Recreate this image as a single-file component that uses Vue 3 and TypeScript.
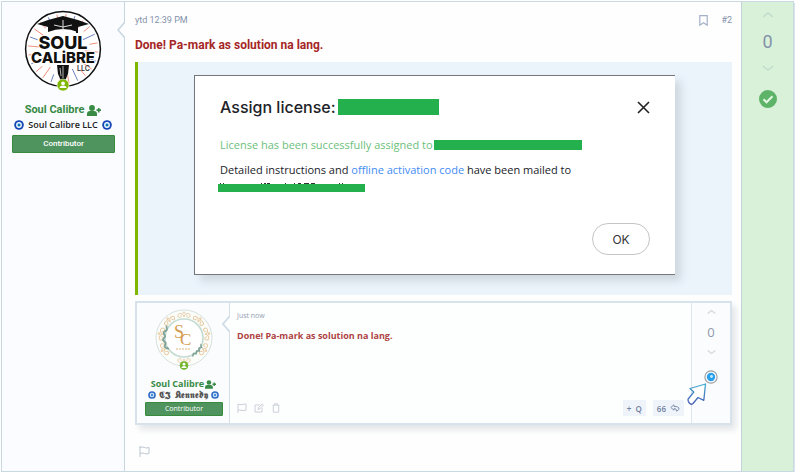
<script setup lang="ts">
interface Ray {
  angle: number
  color: string
  inner: number
}

const rays: Ray[] = Array.from({ length: 24 }, (_, i) => ({
  angle: i * 15 + 5,
  color: i % 3 === 1 ? '#5a72b5' : '#ee7a66',
  inner: i % 2 ? 27 : 22,
}))

const sprigs: number[] = [0, 1, 2, 3, 4, 5, 6]
const ornaments: number[] = [0, 40, 80, 120, 180, 240, 280, 320]
</script>

<template>
  <article class="post">
    <aside class="user">
      <svg class="avatar" viewBox="0 0 78 78" role="img" aria-label="Soul Calibre">
        <circle cx="39" cy="39" r="37.4" fill="#fff" stroke="#111" stroke-width="1.5" />
        <line
          v-for="ray in rays"
          :key="ray.angle"
          x1="39"
          :y1="39 - ray.inner"
          x2="39"
          y2="4"
          :stroke="ray.color"
          stroke-width=".8"
          :transform="`rotate(${ray.angle} 39 39)`"
        />
        <path d="M39 6 54 10 65 14l-11 3v5q-15-6-30 0v-5l-11-3 11-4Z" fill="#111" />
        <path d="M39 10v11M30 15l9 2 9-2" stroke="#ddd" stroke-width="1" fill="none" />
        <path d="M53 15v8" stroke="#111" stroke-width="2" />
        <g class="logo-type" text-anchor="middle">
          <text x="39" y="39" font-size="18" stroke="#fff" stroke-width="1.5" paint-order="stroke">SOUL</text>
          <text x="39" y="53" font-size="15" stroke="#fff" stroke-width="1.5" paint-order="stroke">CALiBRE</text>
        </g>
        <text class="logo-small" x="53" y="61" font-size="7">LLC</text>
        <path d="M33 55h12l-1 9-3 7h-4l-3-7Z" fill="#111" />
        <path d="M39 56v12M36 58l1 8" stroke="#ddd" stroke-width=".8" />
        <circle cx="39" cy="75" r="6" fill="#7fb700" stroke="#fff" stroke-width=".6" />
        <circle cx="39" cy="73.3" r="1.9" fill="#fff" />
        <path d="M35.5 78q0-2.6 3.5-2.6t3.5 2.6Z" fill="#fff" />
      </svg>
      <a class="name" href="#user">
        Soul Calibre
        <svg class="plus-user" viewBox="0 0 14 11"><circle cx="5" cy="3" r="2.9" /><path d="M0 11V9q0-3 3-3h4q3 0 3 3v2ZM9.500 4.200H14v1.800H9.500ZM10.900 2.900h1.700v4.500h-1.700Z" /></svg>
      </a>
      <div class="subtitle">
        <svg class="eye" viewBox="0 0 10 10"><circle cx="5" cy="5" r="4.8" fill="#1746b5" /><circle cx="5" cy="5" r="2.9" fill="#fff" /><circle cx="5" cy="5" r="1.7" fill="#25a3e5" /><circle cx="5" cy="5" r=".7" fill="#123" /></svg>
        <span>Soul Calibre LLC</span>
        <svg class="eye" viewBox="0 0 10 10"><circle cx="5" cy="5" r="4.8" fill="#1746b5" /><circle cx="5" cy="5" r="2.9" fill="#fff" /><circle cx="5" cy="5" r="1.7" fill="#25a3e5" /><circle cx="5" cy="5" r=".7" fill="#123" /></svg>
      </div>
      <div class="role">Contributor</div>
      <svg class="notch" viewBox="0 0 8 16"><path d="M8 0 1 8l7 8" fill="#fefefe" stroke="#c7d7e0" stroke-width="1.6" /></svg>
    </aside>

    <main class="body">
      <header class="meta">
        <a href="#time">ytd 12:39 PM</a>
        <span class="tools">
          <button type="button" class="plain" aria-label="Bookmark">
            <svg class="bookmark" viewBox="0 0 9 11"><path d="M.8.7h7.4v9.5L4.5 7.7.8 10.2Z" fill="none" stroke="#a5b0c8" stroke-width="1.2" /></svg>
          </button>
          <a href="#post-2">#2</a>
        </span>
      </header>
      <h2 class="title">Done! Pa-mark as solution na lang.</h2>

      <blockquote class="quote">
        <section class="dialog">
          <div class="dialog-head">
            <h3>Assign license:</h3>
            <span class="redact redact-name"></span>
            <button type="button" class="plain close" aria-label="Close">
              <svg viewBox="0 0 13 13"><path d="m1 1 11 11M12 1 1 12" stroke="#222" stroke-width="1.6" /></svg>
            </button>
          </div>
          <p class="success">License has been successfully assigned to<span class="redact redact-to"></span></p>
          <p class="detail">Detailed instructions and <a href="#code">offline activation code</a> have been mailed to</p>
          <div class="hidden-line">
            <svg viewBox="0 0 147 1"><path d="M2 .5h1m2 0h1M43 .5h1m2 0h2m1 0h3M67 .5h1m8 0h1m3 0h3m3 0h5m2 0h4M121 .5h1m2 0h1" stroke="#333" stroke-width="1" /></svg>
            <span class="redact redact-mail"></span>
          </div>
          <div class="actions"><button type="button" class="ok">OK</button></div>
        </section>
      </blockquote>

      <section class="preview">
        <div class="mini-user">
          <svg class="mini-avatar" viewBox="0 0 60 62" role="img" aria-label="SC">
            <circle cx="30" cy="30" r="28" fill="#fbfdfb" stroke="#d7e1dc" stroke-width="1" />
            <g v-for="a in ornaments" :key="a" :transform="`rotate(${a} 30 30)`" fill="none" stroke="#e8cba4" stroke-width="1">
              <path d="M30 9c-1-5-7-4-6-1s4 1 3-1M30 9c1-5 7-4 6-1s-4 1-3-1" />
              <circle cx="30" cy="4.600" r=".8" />
            </g>
            <circle cx="30" cy="30" r="19" fill="#fff" stroke="#c5dcd3" stroke-width="1.700" />
            <g fill="#7fa396">
              <ellipse v-for="s in sprigs" :key="s" cx="10" cy="30" rx="1" ry="2.800" :transform="`rotate(${s * 10 - 30} 30 30) rotate(${s % 2 ? 35 : -35} 10 30)`" />
              <ellipse v-for="s in sprigs" :key="`b${s}`" cx="49" cy="30" rx=".8" ry="2.300" :transform="`rotate(${s * 6 + 25} 30 30) rotate(${s % 2 ? 40 : -40} 49 30)`" />
            </g>
            <g class="monogram" fill="#d39c52"><text x="20" y="30" font-size="18">S</text><text x="26" y="37" font-size="17">C</text></g>
            <path d="M22 41h15" stroke="#ddb477" stroke-width="1.200" stroke-dasharray="2 1" />
            <circle cx="30" cy="57.500" r="4.300" fill="#71b52b" />
            <circle cx="30" cy="56.200" r="1.400" fill="#fff" />
            <path d="M27.400 60q0-2 2.600-2t2.600 2Z" fill="#fff" />
          </svg>
          <div class="name mini-name">
            Soul Calibre
            <svg class="plus-user mini-plus" viewBox="0 0 14 11"><circle cx="5" cy="3" r="2.900" /><path d="M0 11V9q0-3 3-3h4q3 0 3 3v2ZM9.500 4.200H14v1.800H9.500ZM10.900 2.900h1.700v4.500h-1.700Z" /></svg>
          </div>
          <div class="subtitle mini-sub">
            <svg class="eye mini-eye" viewBox="0 0 10 10"><circle cx="5" cy="5" r="4.800" fill="#346bc5" /><circle cx="5" cy="5" r="2.800" fill="#d7eafa" /><circle cx="5" cy="5" r="1.500" fill="#428edc" /></svg>
            <span>𝕮𝕵 𝕶𝖊𝖓𝖓𝖊𝖉𝖞</span>
            <svg class="eye mini-eye" viewBox="0 0 10 10"><circle cx="5" cy="5" r="4.800" fill="#346bc5" /><circle cx="5" cy="5" r="2.800" fill="#d7eafa" /><circle cx="5" cy="5" r="1.500" fill="#428edc" /></svg>
          </div>
          <div class="role mini-role">Contributor</div>
          <svg class="notch mini-notch" viewBox="0 0 8 16"><path d="M8 0 1 8l7 8" fill="#fdfefe" stroke="#d0dce5" stroke-width="1.800" /></svg>
        </div>
        <div class="mini-body">
          <span class="just">Just now</span>
          <strong class="mini-title">Done! Pa-mark as solution na lang.</strong>
          <div class="mini-foot">
            <button type="button" class="plain" aria-label="Report"><svg class="mini-icon" viewBox="0 0 10 10"><path d="M1 10V1q2 1 4 .5T9 1v6q-2 1-4 .5T1 7" /></svg></button>
            <button type="button" class="plain" aria-label="Edit"><svg class="mini-icon" viewBox="0 0 10 10"><path d="M5.500 2H1v7h7V5M4 6.500 4.400 4.700 8.200 1l1.200 1.200L5.700 6Z" /></svg></button>
            <button type="button" class="plain" aria-label="Delete"><svg class="mini-icon" viewBox="0 0 10 10"><path d="M1.500 2.200h7M3.500 2V.8h3V2M2.300 2.500v6.700h5.400V2.500" /></svg></button>
            <span class="spacer"></span>
            <button type="button" class="chip">+&nbsp; Q</button>
            <button type="button" class="chip">66 <svg class="reply" viewBox="0 0 10 8"><path d="M4 .8.8 3.500 4 6.200V4.600q3-.2 2.500 2.600Q9.500 6 9 4 8.200 2.300 4 2.400Z" /></svg></button>
          </div>
        </div>
        <div class="mini-votes">
          <svg class="chev mini-chev" viewBox="0 0 12 6"><path d="m1 5 5-4 5 4" /></svg>
          <span>0</span>
          <svg class="chev mini-chev" viewBox="0 0 12 6"><path d="m1 1 5 4 5-4" /></svg>
          <svg class="target" viewBox="0 0 14 14"><circle cx="7" cy="7" r="6.100" fill="#fff" stroke="#9c9fa6" stroke-width="1.200" /><circle cx="7" cy="7" r="4.200" fill="#2ba0ea" /><circle cx="7.500" cy="6.500" r="1.400" fill="#c8ecff" /></svg>
          <svg class="pointer" viewBox="0 0 20 22">
            <defs><linearGradient id="edge" x1="0" y1="0" x2="0" y2="1"><stop offset="0" stop-color="#45adcf" /><stop offset="1" stop-color="#4357b5" /></linearGradient></defs>
            <path d="M18.500 1 3 5.500 6.800 9 1.200 16Q.500 18 2.500 20.300 4 22 6 20.500L11 14.500 16.800 17.300Z" fill="#fff" stroke="url(#edge)" stroke-width="1.300" stroke-linejoin="round" />
          </svg>
        </div>
      </section>

      <footer class="footer">
        <button type="button" class="plain" aria-label="Report">
          <svg class="flag" viewBox="0 0 11 11"><path d="M1 0v11M1 1.500q2.500-1 4.500 0t4.500 0v6q-2.500 1-4.500 0t-4.500 0" fill="none" stroke="#bcc5d2" /></svg>
        </button>
      </footer>
    </main>

    <aside class="votes">
      <button type="button" class="plain" aria-label="Upvote"><svg class="chev" viewBox="0 0 12 6"><path d="m1 5 5-4 5 4" /></svg></button>
      <span class="count">0</span>
      <button type="button" class="plain" aria-label="Downvote"><svg class="chev" viewBox="0 0 12 6"><path d="m1 1 5 4 5-4" /></svg></button>
      <button type="button" class="plain solved" aria-label="Solution"><svg class="check" viewBox="0 0 18 18"><circle cx="9" cy="9" r="9" fill="#5db368" /><path d="m4.500 9.300 3 3 6-6" fill="none" stroke="#e2f6e2" stroke-width="2.200" /></svg></button>
    </aside>
  </article>
</template>

<style>
body {
  background: #fff;
}
</style>

<style scoped>
* {
  box-sizing: border-box;
}

svg {
  display: block;
  flex: none;
}

h2,
h3,
p,
blockquote {
  margin: 0;
}

a {
  color: inherit;
  text-decoration: none;
}

button {
  font: inherit;
}

.plain {
  display: block;
  padding: 0;
  border: 0;
  background: none;
  color: inherit;
}

.post {
  display: grid;
  grid-template-columns: 123px minmax(0, 1fr) 52px;
  margin: 1px 1px 0;
  border: 1px solid #c9d9e1;
  box-shadow: 1px 2px 1px #dbe4eb;
  font-family: Roboto, "Liberation Sans", sans-serif;
}

.user {
  position: relative;
  display: flex;
  flex-direction: column;
  align-items: center;
  padding: 8px 9px 0;
  border-right: 1px solid #c7d7e0;
  background: #fafcff;
}

.avatar {
  width: 78px;
  height: 78px;
  overflow: visible;
}

.logo-type {
  font-family: Inter, "Liberation Sans", sans-serif;
  font-weight: 800;
  fill: #111;
}

.logo-small {
  font-family: Inter, sans-serif;
  font-weight: 600;
  fill: #333;
}

.name {
  display: flex;
  align-items: center;
  gap: 3px;
  margin-top: 14px;
  color: #388a45;
  font-size: 11px;
  font-weight: 700;
  line-height: 16px;
  white-space: nowrap;
}

.plus-user {
  width: 14px;
  height: 11px;
  fill: currentColor;
}

.subtitle {
  display: flex;
  align-items: center;
  gap: 4px;
  color: #222;
  font-family: "Open Sans", sans-serif;
  font-size: 9px;
  font-weight: 600;
  line-height: 14px;
  white-space: nowrap;
}

.eye {
  width: 10px;
  height: 10px;
}

.role {
  align-self: stretch;
  margin: 3px 0 0 1px;
  border: 1px solid #388a3d;
  border-radius: 1px;
  background: #4f935f;
  color: #fff;
  font-size: 8px;
  font-weight: 500;
  line-height: 16px;
  text-align: center;
}

.notch {
  position: absolute;
  top: 20px;
  right: -1px;
  width: 8px;
  height: 16px;
}

.body {
  padding: 10px 9px 0 10px;
  background: #fefefe;
}

.meta {
  display: flex;
  justify-content: space-between;
  align-items: center;
  color: #8592ab;
  font-size: 9px;
  line-height: 16px;
}

.tools {
  display: flex;
  align-items: center;
  gap: 13px;
}

.bookmark {
  width: 9px;
  height: 11px;
}

.title {
  margin-top: 8px;
  color: #a52626;
  font-size: 12px;
  line-height: 18px;
}

.quote {
  display: flex;
  justify-content: center;
  margin-top: 8px;
  padding: 13px 57px 20px 56px;
  border-left: 3px solid #7fb700;
  background: #ebf3fb;
}

.dialog {
  flex: 1;
  min-width: 0;
  padding: 19px 25px;
  border: 1px solid #74777b;
  border-right: 0;
  background: #fff;
  box-shadow: 6px 6px 8px #cfd8df;
  color: #202228;
  font-family: Inter, sans-serif;
}

.dialog-head {
  display: flex;
  align-items: center;
}

.dialog-head h3 {
  font-size: 16px;
  font-weight: 500;
  line-height: 24px;
}

.redact {
  display: inline-block;
  background: #24b14d;
}

.redact-name {
  width: 101px;
  height: 16px;
  margin-left: 2px;
}

.close {
  margin-left: auto;
}

.close svg {
  width: 13px;
  height: 13px;
}

.success,
.detail {
  font-family: "Open Sans", sans-serif;
  font-size: 11px;
  line-height: 20px;
}

.success {
  display: flex;
  align-items: center;
  margin-top: 16px;
  color: #6cbf7b;
}

.redact-to {
  width: 148px;
  height: 10px;
  margin-left: 1px;
}

.detail {
  margin-top: 5px;
}

.detail a {
  color: #3f8cf5;
}

.hidden-line {
  width: 147px;
  margin: 3px 0 0 -2px;
}

.hidden-line svg {
  width: 147px;
  height: 1px;
}

.redact-mail {
  display: block;
  height: 8px;
}

.actions {
  display: flex;
  justify-content: flex-end;
  margin-top: 31px;
}

.ok {
  width: 58px;
  height: 32px;
  padding: 0;
  border: 1px solid #c5c5c5;
  border-radius: 16px;
  background: #fff;
  color: #333;
  font-size: 12px;
}

.preview {
  display: grid;
  grid-template-columns: 93px minmax(0, 1fr) 39px;
  margin-top: 6px;
  border: 2px solid #d8e2ea;
  background: #fdfefe;
  box-shadow: 4px 5px 6px #e4e7ea;
  font-family: "Open Sans", sans-serif;
}

.mini-user {
  position: relative;
  display: flex;
  flex-direction: column;
  align-items: center;
  padding: 5px 6px 7px 7px;
  border-right: 1px solid #d5e0e8;
  background: #fafcfe;
}

.mini-avatar {
  width: 60px;
  height: 62px;
}

.monogram {
  font-family: "Liberation Serif", serif;
}

.mini-name {
  gap: 1px;
  margin-top: 8px;
  font-size: 9px;
  line-height: 12px;
}

.mini-plus {
  width: 11px;
  height: 9px;
}

.mini-sub {
  gap: 3px;
  color: #555;
  font-family: "DejaVu Sans", serif;
  font-size: 9px;
  line-height: 10px;
}

.mini-eye {
  width: 8px;
  height: 8px;
}

.mini-role {
  margin: 2px 0 0 1px;
  font-size: 7px;
  line-height: 12px;
}

.mini-notch {
  top: 13px;
}

.mini-body {
  display: flex;
  flex-direction: column;
  padding: 7px;
}

.just {
  color: #93a1b3;
  font-size: 7px;
  line-height: 12px;
}

.mini-title {
  margin-top: 6px;
  color: #ad4343;
  font-size: 9px;
  line-height: 16px;
}

.mini-foot {
  display: flex;
  align-items: center;
  gap: 7px;
  margin-top: auto;
}

.mini-icon {
  width: 10px;
  height: 10px;
  fill: none;
  stroke: #cbd1d9;
}

.spacer {
  flex: 1;
}

.chip {
  display: flex;
  align-items: center;
  justify-content: center;
  gap: 4px;
  height: 16px;
  padding: 0 4px;
  border: 0;
  border-radius: 1px;
  background: #eff4fb;
  color: #6f7f9e;
  font-size: 8px;
  font-weight: 600;
}

.reply {
  width: 10px;
  height: 8px;
  fill: none;
  stroke: #8090ad;
}

.mini-votes {
  position: relative;
  display: flex;
  flex-direction: column;
  align-items: center;
  padding-top: 6px;
  border-left: 1px solid #dde6ee;
  background: #fafcfe;
  color: #8f99ad;
  font-size: 13px;
  line-height: 18px;
}

.mini-votes span {
  margin: 8px 0;
}

.chev {
  width: 12px;
  height: 6px;
  fill: none;
  stroke: #bfdccb;
  stroke-width: 1.5;
}

.mini-chev {
  width: 9px;
  height: 6px;
  stroke: #d2d9df;
}

.target {
  width: 14px;
  height: 14px;
  margin-top: 15px;
}

.pointer {
  position: absolute;
  top: 80px;
  left: -5px;
  width: 20px;
  height: 22px;
}

.footer {
  padding: 21px 4px 14px;
}

.flag {
  width: 11px;
  height: 11px;
}

.votes {
  display: flex;
  flex-direction: column;
  align-items: center;
  padding-top: 10px;
  border-left: 1px solid #bfd3da;
  background: #daf1d9;
}

.count {
  margin: 12px 0 11px;
  color: #8293aa;
  font-size: 18px;
  line-height: 24px;
}

.solved {
  margin-top: 19px;
}

.check {
  width: 18px;
  height: 18px;
}
</style>
